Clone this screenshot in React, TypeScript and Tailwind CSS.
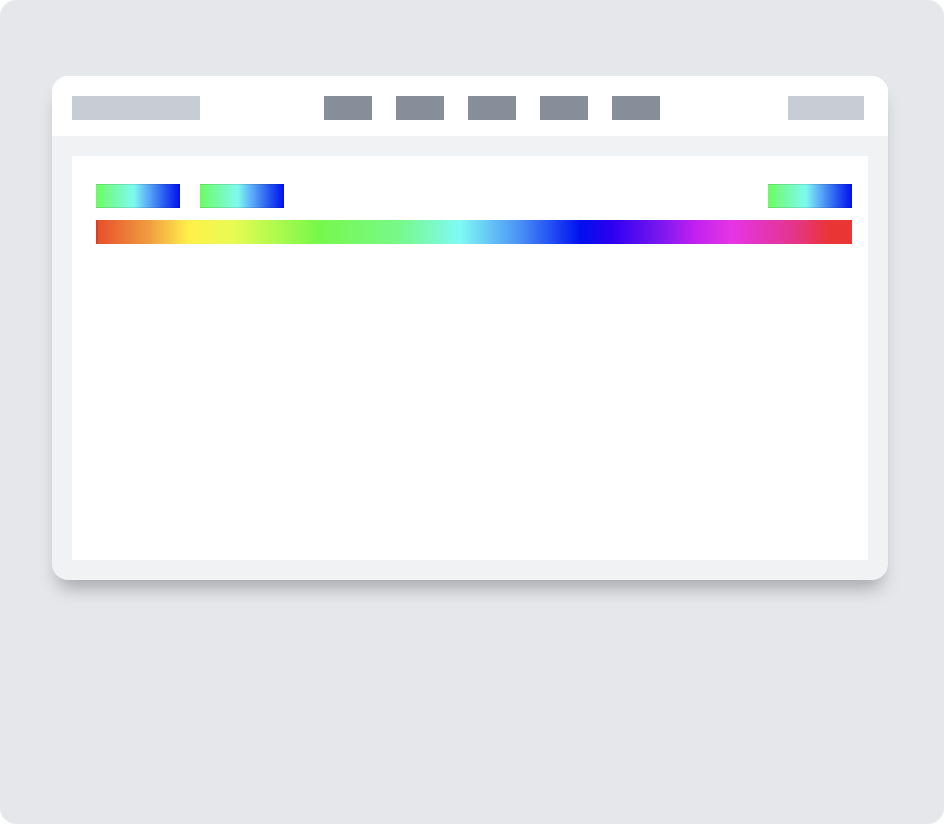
import React from "react";

const navItems = [0, 1, 2, 3, 4];

const SmallSwatch: React.FC = () => (
  <div className="h-6 w-[84px] border-y border-black/10 bg-[linear-gradient(90deg,#6cfb64_0%,#7ffaf0_45%,#5fb4f8_60%,#1f4cf0_85%,#0010f0_100%)]" />
);

const App: React.FC = () => {
  return (
    <div className="h-[824px] w-[944px] bg-white">
      <div className="flex h-full w-full flex-col rounded-2xl bg-[#e5e7eb] px-[52px] pt-[76px]">
        <div className="flex h-[504px] w-[836px] flex-col overflow-hidden rounded-2xl bg-[#f1f2f4] shadow-[0_14px_18px_-6px_rgba(0,0,0,0.28)]">
          {/* header */}
          <div className="flex h-[60px] items-start bg-white pl-5 pr-6 pt-5">
            <div className="h-6 w-32 bg-[#c8ccd4]" />
            <div className="ml-[124px] flex gap-6">
              {navItems.map((i) => (
                <div key={i} className="h-6 w-12 bg-[#868e99]" />
              ))}
            </div>
            <div className="ml-auto h-6 w-[76px] bg-[#c8ccd4]" />
          </div>

          {/* body */}
          <div className="flex-1 p-5">
            <div className="h-full bg-white pl-6 pr-4 pt-7">
              <div className="flex gap-5">
                <SmallSwatch />
                <SmallSwatch />
                <div className="ml-auto">
                  <SmallSwatch />
                </div>
              </div>
              <div className="mt-3 h-6 w-full border-l-2 border-[#d84020] bg-[linear-gradient(90deg,#e8502c_0%,#f0a040_7%,#fef04a_12%,#e8fb52_18%,#78f84a_29%,#76f98a_40%,#7ffaf4_48%,#4a90f4_56%,#0010f0_64%,#2a00f0_68%,#8018f0_75%,#c020f0_79%,#e535e5_84%,#e43590_92%,#ea3535_97%,#ea3535_100%)]" />
            </div>
          </div>
        </div>
      </div>
    </div>
  );
};

export default App;
